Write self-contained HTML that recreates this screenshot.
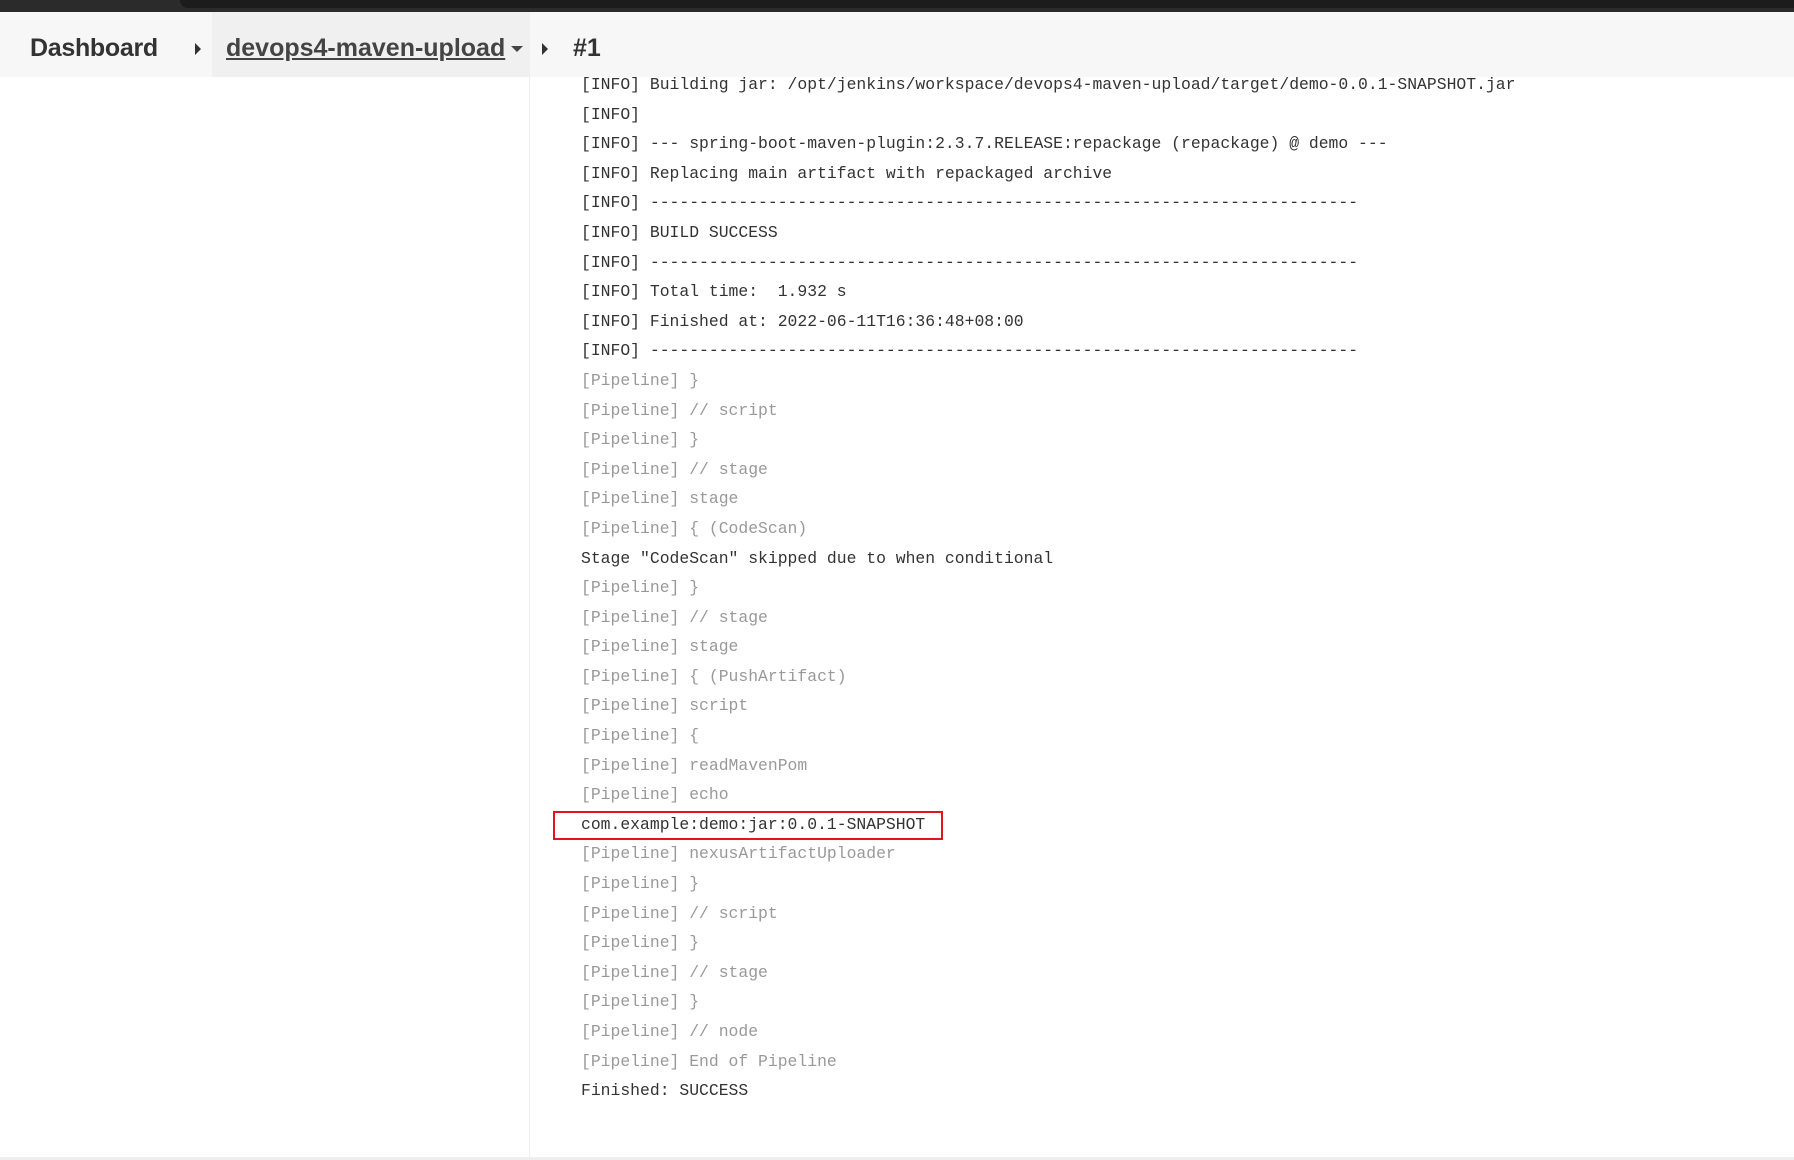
<!DOCTYPE html>
<html><head><meta charset="utf-8"><style>
body{margin:0;width:1794px;height:1160px;background:#fff;position:relative;overflow:hidden;font-family:"Liberation Sans",sans-serif}
.top{position:absolute;left:0;top:0;width:1794px;height:12px;background:#2b2b2b}
.top div{position:absolute;left:180px;top:0;width:1614px;height:8px;background:#1c1c1c;border-radius:0 0 0 10px}
.bc{position:absolute;left:0;top:12px;width:1794px;height:65px;background:#f7f7f7}
.seg{position:absolute;top:4px;height:65px;line-height:65px;font-weight:bold;font-size:25px;color:#333}
.side{position:absolute;left:529px;top:77px;width:1px;height:1080px;background:#eee}
.bot{position:absolute;left:0;top:1157px;width:1794px;height:3px;background:#eee}
.log{position:absolute;left:581px;top:70px;font-family:"Liberation Mono","Noto Sans CJK SC",monospace;font-size:16.4px;line-height:29.6px;color:#333;white-space:pre}
.g{color:#999}
.box{position:absolute;left:553px;top:811px;width:386px;height:25px;border:2px solid #e0151e}
.arr{display:inline-block;width:0;height:0;border-top:6px solid transparent;border-bottom:6px solid transparent;border-left:6px solid #333;vertical-align:middle}
</style></head><body>
<div class="top"><div></div></div>
<div class="bc">
<div class="seg" style="left:30px;letter-spacing:-0.3px">Dashboard</div>
<div class="seg" style="left:195px"><span class="arr"></span></div>
<div style="position:absolute;left:212px;top:0;width:318px;height:65px;background:#f0f0f0"></div>
<div class="seg" style="left:226px;text-decoration:underline;color:#444">devops4-maven-upload</div>
<div class="seg" style="left:511px"><span style="display:inline-block;border-left:6px solid transparent;border-right:6px solid transparent;border-top:6px solid #444;vertical-align:middle"></span></div>
<div class="seg" style="left:542px"><span class="arr"></span></div>
<div class="seg" style="left:573px">#1</div>
</div>
<div class="side"></div>
<div class="bot"></div>
<div class="box"></div>
<div class="log">[INFO] Building jar: /opt/jenkins/workspace/devops4-maven-upload/target/demo-0.0.1-SNAPSHOT.jar
[INFO]
[INFO] --- spring-boot-maven-plugin:2.3.7.RELEASE:repackage (repackage) @ demo ---
[INFO] Replacing main artifact with repackaged archive
[INFO] ------------------------------------------------------------------------
[INFO] BUILD SUCCESS
[INFO] ------------------------------------------------------------------------
[INFO] Total time:  1.932 s
[INFO] Finished at: 2022-06-11T16:36:48+08:00
[INFO] ------------------------------------------------------------------------
<span class="g">[Pipeline] }
[Pipeline] // script
[Pipeline] }
[Pipeline] // stage
[Pipeline] stage
[Pipeline] { (CodeScan)</span>
Stage "CodeScan" skipped due to when conditional
<span class="g">[Pipeline] }
[Pipeline] // stage
[Pipeline] stage
[Pipeline] { (PushArtifact)
[Pipeline] script
[Pipeline] {
[Pipeline] readMavenPom
[Pipeline] echo</span>
com.example:demo:jar:0.0.1-SNAPSHOT
<span class="g">[Pipeline] nexusArtifactUploader
[Pipeline] }
[Pipeline] // script
[Pipeline] }
[Pipeline] // stage
[Pipeline] }
[Pipeline] // node
[Pipeline] End of Pipeline</span>
Finished: SUCCESS</div>
</body></html>
